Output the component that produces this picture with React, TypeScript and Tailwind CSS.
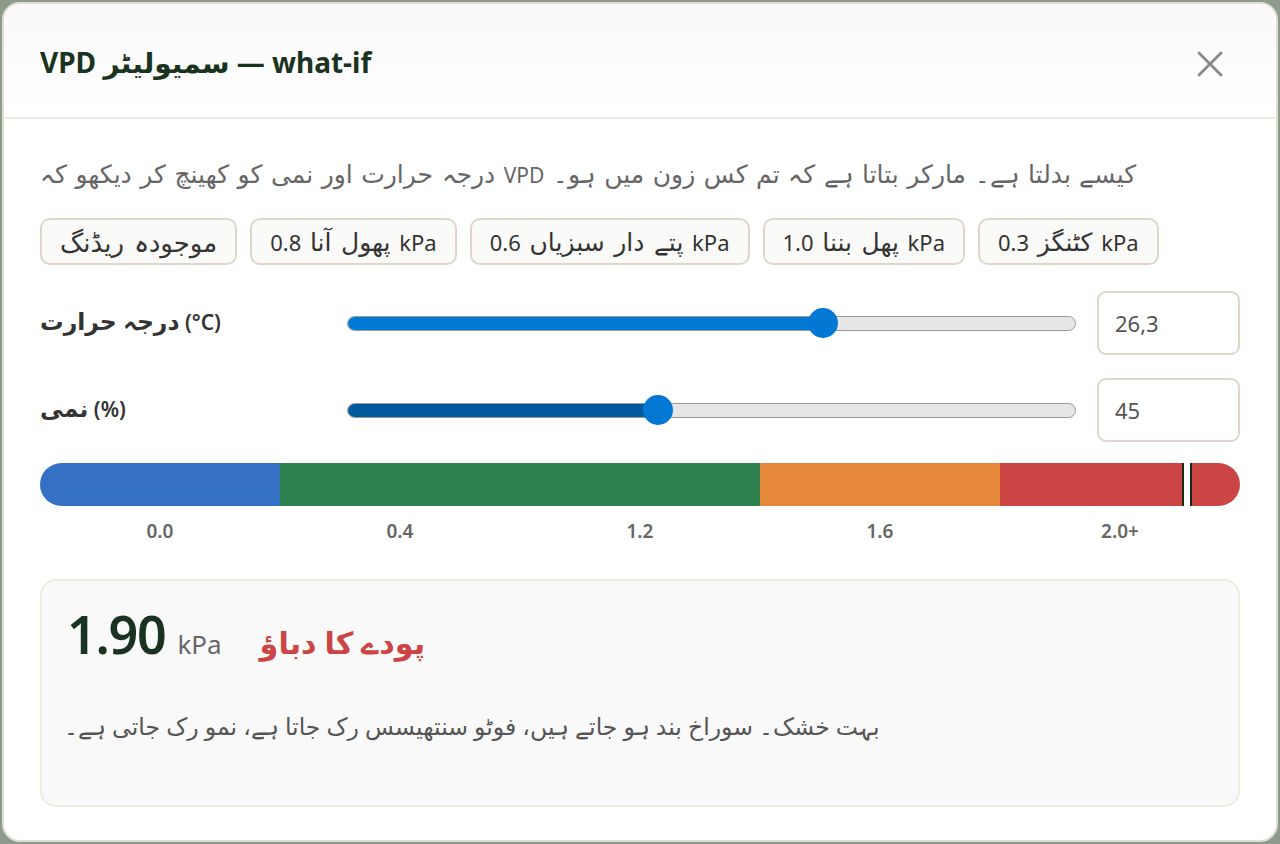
import type { ReactNode } from "react";

// DejaVu's Arabic runs narrower than the reference face, so Urdu runs get bumped up a bit
const U = ({ children, size = "text-[1.12em]" }: { children: ReactNode; size?: string }) => (
  <span className={`${size} leading-none`}>{children}</span>
);

const chipUrdu = "text-[25px]";

const presets: ReactNode[] = [
  <U size="text-[26px]">موجودہ ریڈنگ</U>,
  <>
    <U size={chipUrdu}>پھول آنا</U> 0.8 kPa
  </>,
  <>
    <U size={chipUrdu}>پتے دار سبزیاں</U> 0.6 kPa
  </>,
  <>
    <U size={chipUrdu}>پھل بننا</U> 1.0 kPa
  </>,
  <>
    <U size={chipUrdu}>کٹنگز</U> 0.3 kPa
  </>,
];

const scale = ["0.0", "0.4", "1.2", "1.6", "2.0+"];

const Slider = ({ pct, fill }: { pct: number; fill: string }) => (
  <div className="relative flex-1 h-[30px] flex items-center">
    <div className="w-full h-[15px] rounded-full bg-[#e6e6e6] border border-[#9a9a9a] overflow-hidden">
      <div className={`h-full ${fill}`} style={{ width: `${pct}%` }} />
    </div>
    <div
      className="absolute top-0 w-[30px] h-[30px] rounded-full -translate-x-1/2 bg-[#0078d4]"
      style={{ left: `${pct}%` }}
    />
  </div>
);

export default function App() {
  return (
    <div
      className="h-screen w-full bg-[#8e9a8c] p-[2px]"
      style={{ fontFamily: '"Noto Sans", "DejaVu Sans", sans-serif' }}
    >
      <div className="h-full w-full flex flex-col rounded-[18px] border-2 border-[#e3dfd0] bg-white overflow-hidden">
        {/* header */}
        <div className="h-[115px] shrink-0 flex items-center justify-between pl-[36px] pr-[53px] border-b-2 border-[#eeebe1] bg-gradient-to-b from-[#f9f9f9] to-white">
          <h2 className="text-[28px] font-bold text-[#1a3320] pt-[2px]">VPD سمیولیٹر — what-if</h2>
          <svg width="26" height="26" viewBox="0 0 26 26" className="mt-[6px]">
            <path d="M2 2 L24 24 M24 2 L2 24" stroke="#888" strokeWidth="2.8" strokeLinecap="round" />
          </svg>
        </div>

        {/* body */}
        <div className="flex flex-col px-[36px] pt-[42px]">
          <p className="h-[30px] flex items-center text-[21px] text-[#666] [word-spacing:2px]">
            <span>
              <U size="text-[25px]">درجہ حرارت اور نمی کو کھینچ کر دیکھو کہ </U>VPD
              <U size="text-[25px]"> کیسے بدلتا ہے۔ مارکر بتاتا ہے کہ تم کس زون میں ہو۔</U>
            </span>
          </p>

          <div className="flex gap-[13px] mt-[27px]">
            {presets.map((p, i) => (
              <button
                key={i}
                className="h-[47px] px-[18px] rounded-[10px] border-2 border-[#dcd7c9] bg-[#fafaf8] text-[22px] leading-none text-[#333] [word-spacing:3px]"
              >
                {p}
              </button>
            ))}
          </div>

          <div className="flex items-center mt-[26px]">
            <div className="w-[307px] text-[21px] font-semibold text-[#333]">
              <U>درجہ حرارت</U> (°C)
            </div>
            <Slider pct={65.3} fill="bg-[#0078d4]" />
            <div className="ml-[21px] w-[143px] h-[64px] rounded-[9px] border-2 border-[#dcd7c9] flex items-center px-[16px] text-[22px] text-[#555]">
              26,3
            </div>
          </div>

          <div className="flex items-center mt-[23px]">
            <div className="w-[307px] text-[21px] font-semibold text-[#333]">
              <U>نمی</U> (%)
            </div>
            <Slider pct={42.6} fill="bg-[#005a9e]" />
            <div className="ml-[21px] w-[143px] h-[64px] rounded-[9px] border-2 border-[#dcd7c9] flex items-center px-[16px] text-[22px] text-[#555]">
              45
            </div>
          </div>

          {/* zone bar */}
          <div className="relative mt-[21px] h-[43px] rounded-full overflow-hidden flex">
            <div className="flex-[1] bg-[#3471c4]" />
            <div className="flex-[2] bg-[#2d8250]" />
            <div className="flex-[1] bg-[#e5883a]" />
            <div className="flex-[1] bg-[#cc4545]" />
            <div className="absolute top-0 bottom-0 left-[95.2%] w-[10px] bg-white border-x-2 border-[#1a2a1a]" />
          </div>
          <div className="grid grid-cols-5 mt-[11px] text-[19px] font-semibold text-[#666]">
            {scale.map((s) => (
              <div key={s} className="text-center">
                {s}
              </div>
            ))}
          </div>

          {/* result */}
          <div className="mt-[33px] h-[228px] rounded-[16px] border-2 border-[#eeebe1] bg-[#f9f9f9] px-[25px] pt-[27px]">
            <div className="flex items-baseline">
              <span className="text-[52px] font-semibold leading-none text-[#1a3320] tracking-tight">1.90</span>
              <span className="ml-[12px] text-[26px] text-[#666]">kPa</span>
              <span className="ml-[38px] text-[27px] font-semibold text-[#cc4444]">
                <U>پودے کا دباؤ</U>
              </span>
            </div>
            <p className="mt-[50px] -ml-[3px] text-[19px] text-[#555]">
              <U size="text-[1.24em]">بہت خشک۔ سوراخ بند ہو جاتے ہیں، فوٹو سنتھیسس رک جاتا ہے، نمو رک جاتی ہے۔</U>
            </p>
          </div>
        </div>
      </div>
    </div>
  );
}
